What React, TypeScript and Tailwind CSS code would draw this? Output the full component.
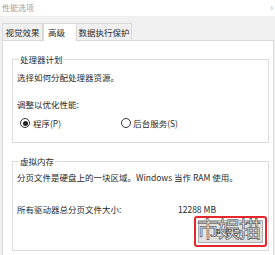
import React from "react";

export default function App() {
  return (
    <div
      className="relative w-[275px] h-[255px] overflow-hidden bg-[#f0f0f0] text-[#2a2a2a] text-[8.5px] leading-[10px]"
      style={{ fontFamily: '"Noto Sans CJK SC", "Noto Sans", sans-serif' }}
    >
      {/* title bar */}
      <div className="h-[16px] bg-white flex items-center justify-between pl-[2px] pr-[2px]">
        <span className="text-[#a0a0a0] text-[8px]">性能选项</span>
        <span className="text-[#a0a0a0] text-[9px]">›</span>
      </div>
      {/* tabs */}
      <div className="h-[24px] flex items-end pl-[2px]">
        <div className="h-[17px] w-[41px] border border-b-0 border-[#d9d9d9] bg-[#f0f0f0] flex items-center justify-center">
          视觉效果
        </div>
        <div className="h-[18px] w-[34px] -mb-px relative z-10 border border-b-0 border-[#d9d9d9] bg-white flex items-center pl-[4px] pb-[1px]">
          高级
        </div>
        <div className="h-[17px] w-[55px] border border-b-0 border-l-0 border-[#d9d9d9] bg-[#f0f0f0] flex items-center justify-center">
          数据执行保护
        </div>
      </div>
      {/* panel */}
      <div className="ml-[2px] mr-[1px] h-[230px] bg-white border border-[#d9d9d9] pl-[9px] pr-[4px] pt-[13px]">
        <fieldset className="border border-[#dcdcdc] pl-[4px] pb-[14px]">
          <legend className="ml-[2px] px-[1px]">处理器计划</legend>
          <div className="mt-[8px]">选择如何分配处理器资源。</div>
          <div className="mt-[17px]">调整以优化性能:</div>
          <div className="mt-[9px] flex items-center h-[10px]">
            <span className="ml-[3px] w-[10px] h-[10px] rounded-full border border-[#333] flex items-center justify-center">
              <span className="w-[5px] h-[5px] rounded-full bg-[#222]" />
            </span>
            <span className="ml-[3px]">程序(P)</span>
            <span className="ml-[60px] w-[10px] h-[10px] rounded-full border border-[#333]" />
            <span className="ml-[2px]">后台服务(S)</span>
          </div>
        </fieldset>
        <fieldset className="mt-[13px] border border-[#dcdcdc] pl-[4px] pb-[3px] pr-[1px]">
          <legend className="ml-[2px] px-[1px]">虚拟内存</legend>
          <div className="mt-[6px]">分页文件是硬盘上的一块区域。Windows 当作 RAM 使用。</div>
          <div className="mt-[22px] flex">
            <span className="w-[161px]">所有驱动器总分页文件大小:</span>
            <span>12288 MB</span>
          </div>
          <div className="mt-[2px] flex justify-end">
            <div className="relative w-[73px] h-[31px] border-2 border-[#e5262c] rounded-[3px] p-[2px]">
              <div className="w-full h-full bg-[#e1e1e1] border border-[#adadad] flex items-center justify-center">
                更改(C)...
              </div>
              <div className="absolute left-[1px] top-[-4px] text-[22px] leading-[26px] text-white tracking-[-1px] [-webkit-text-stroke:0.8px_#6b6b6b]">
                市娱描
              </div>
            </div>
          </div>
        </fieldset>
      </div>
    </div>
  );
}
